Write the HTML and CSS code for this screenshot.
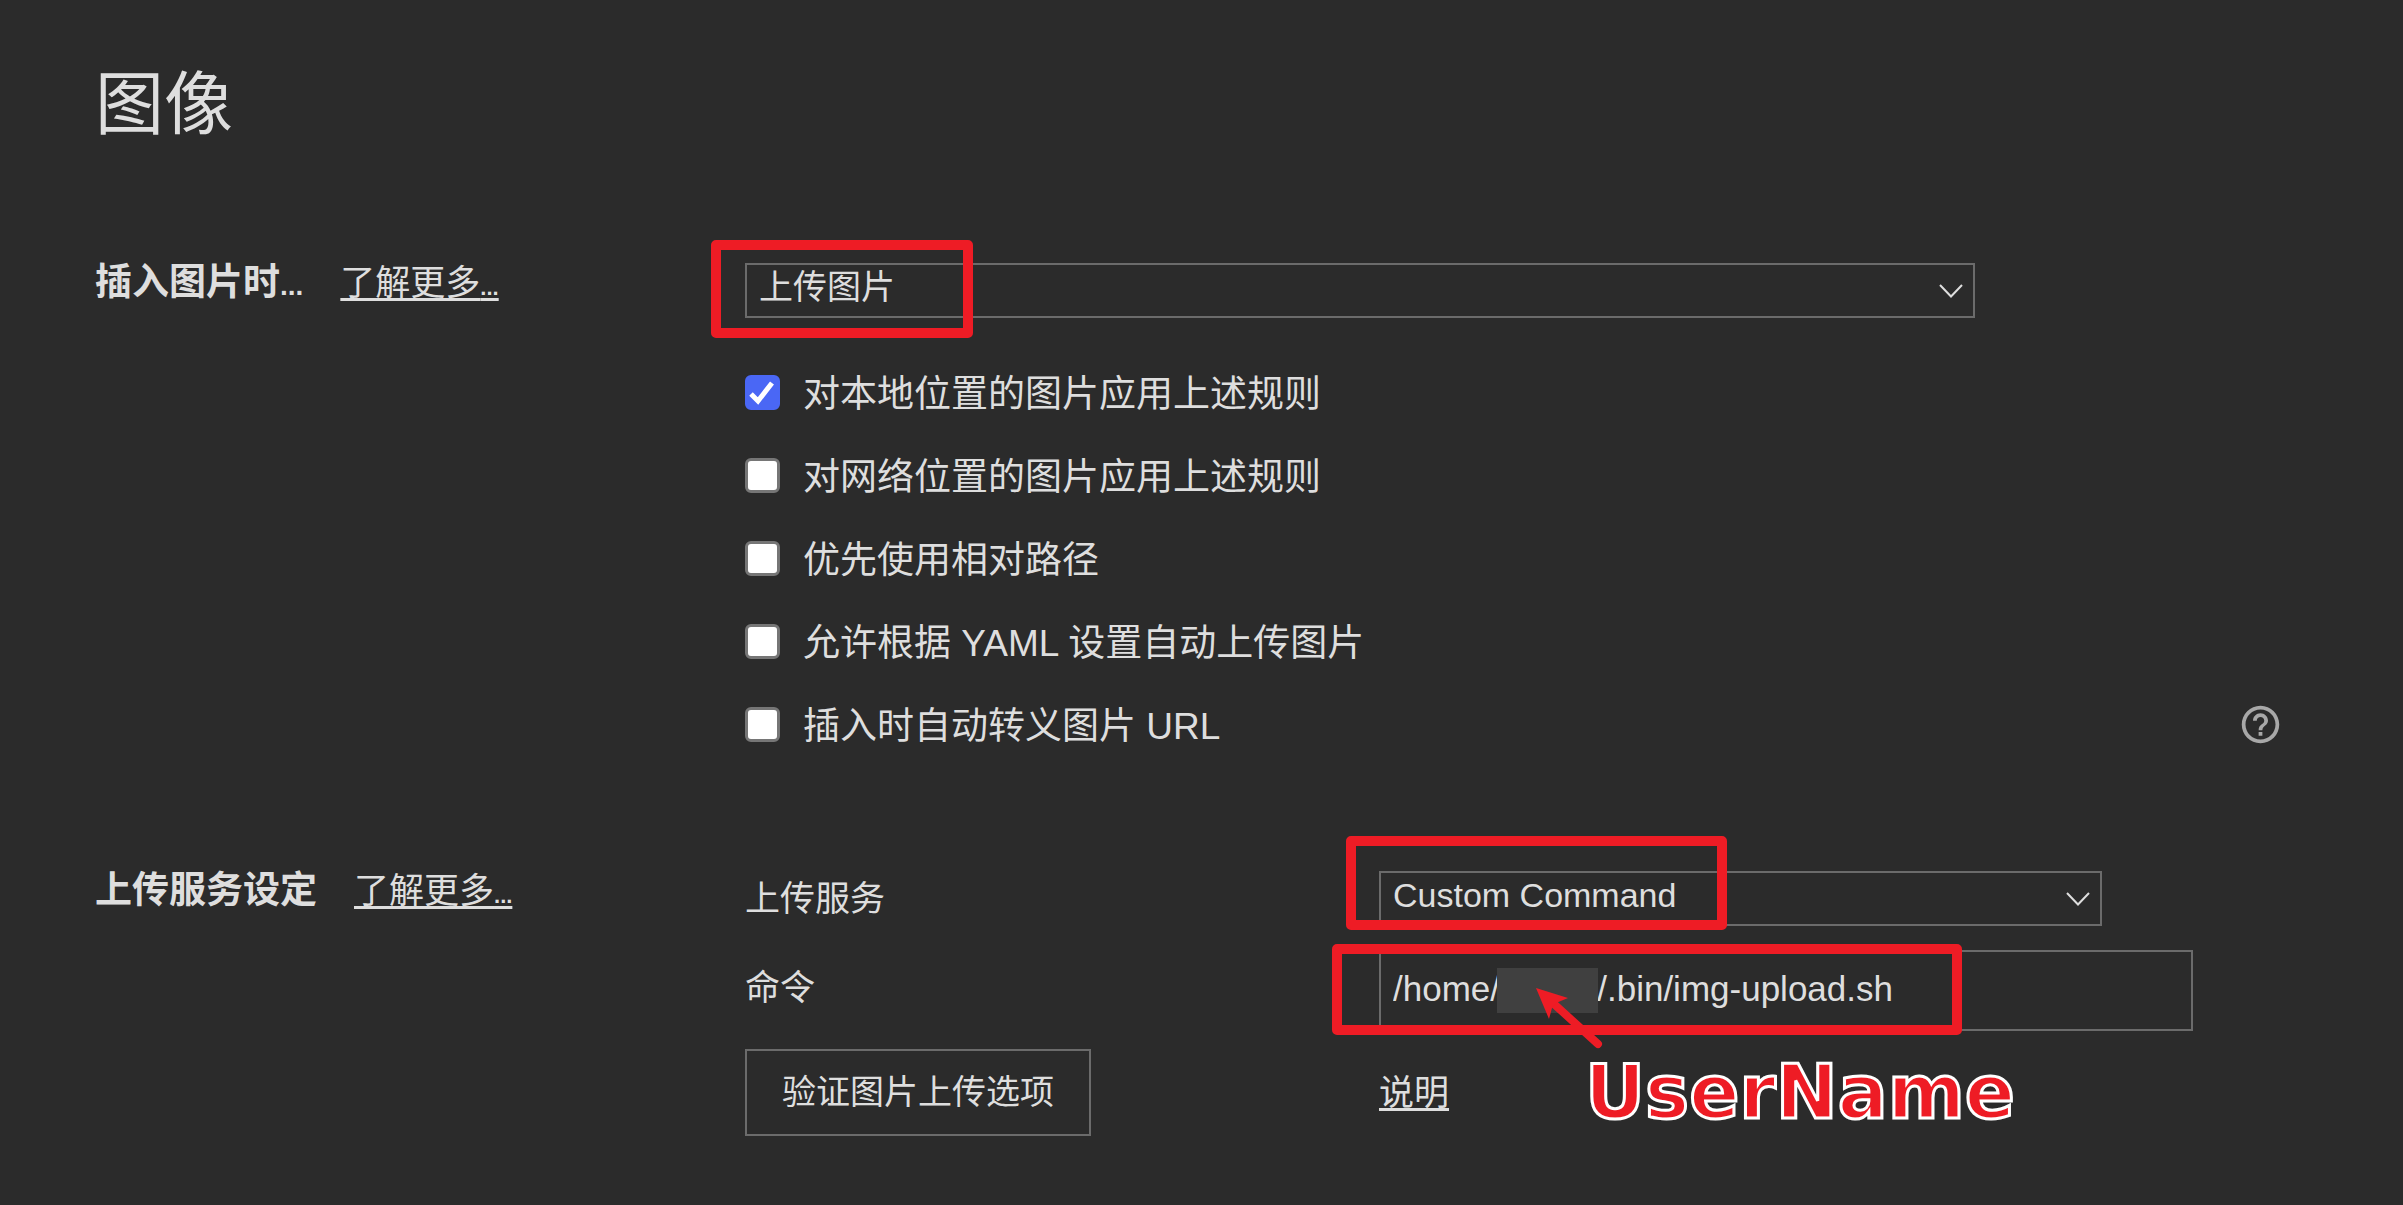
FILE: index.html
```html
<!DOCTYPE html>
<html lang="zh-CN">
<head>
	<meta charset="UTF-8">
	<title>图像</title>
	<link rel="stylesheet" href="styles.css">
</head>
<body>
	<main id="settings">
		<h1>图像</h1>
		<section class="group">
			<div class="group-label">
				<h2>插入图片时<span class="dots">...</span></h2>
				<a href="#insert">了解更多<span class="dots">...</span></a>
			</div>
			<div class="group-body">
				<div class="select-box">
					<select id="action" aria-label="插入图片时">
						<option>上传图片</option>
					</select>
					<svg class="chevron" viewBox="0 0 24 14"><path d="M1 1l11 11.500L23 1"/></svg>
					<span class="mark mark-action"></span>
				</div>
				<div class="checks">
					<div class="check">
						<input type="checkbox" id="local" checked>
						<label for="local">对本地位置的图片应用上述规则</label>
					</div>
					<div class="check">
						<input type="checkbox" id="online">
						<label for="online">对网络位置的图片应用上述规则</label>
					</div>
					<div class="check">
						<input type="checkbox" id="relative">
						<label for="relative">优先使用相对路径</label>
					</div>
					<div class="check">
						<input type="checkbox" id="yaml">
						<label for="yaml">允许根据 YAML 设置自动上传图片</label>
					</div>
					<div class="check">
						<input type="checkbox" id="escape">
						<label for="escape">插入时自动转义图片 URL</label>
						<button type="button" class="help" aria-label="帮助">
							<svg viewBox="0 0 24 24"><path d="M11 18h2v-2h-2v2zm1-16C6.480 2 2 6.480 2 12s4.480 10 10 10 10-4.480 10-10S17.520 2 12 2zm0 18c-4.410 0-8-3.590-8-8s3.590-8 8-8 8 3.590 8 8-3.590 8-8 8zm0-14c-2.210 0-4 1.790-4 4h2c0-1.100.9-2 2-2s2 .9 2 2c0 2-3 1.750-3 5h2c0-2.250 3-2.500 3-5 0-2.210-1.790-4-4-4z"/></svg>
						</button>
					</div>
				</div>
			</div>
		</section>
		<section class="group">
			<div class="group-label">
				<h2>上传服务设定</h2>
				<a href="#upload">了解更多<span class="dots">...</span></a>
			</div>
			<form class="group-body upload">
				<label for="service">上传服务</label>
				<div class="select-box">
					<select id="service">
						<option>Custom Command</option>
					</select>
					<svg class="chevron" viewBox="0 0 24 14"><path d="M1 1l11 11.500L23 1"/></svg>
					<span class="mark mark-service"></span>
				</div>
				<label for="command">命令</label>
				<div class="command-box">
					<input type="text" id="command" value="/home/          /.bin/img-upload.sh">
					<span class="mask"></span>
					<span class="mark mark-command"></span>
					<svg class="arrow" viewBox="0 0 70 64"><path class="shaft" d="M18 16L62 56"/><path class="head" d="M0 0l32 10-12 5-4 5-3 11z"/></svg>
					<span class="note">UserName</span>
				</div>
				<button type="button" class="verify">验证图片上传选项</button>
				<div><a href="#help">说明</a></div>
			</form>
		</section>
	</main>
</body>
</html>
```
FILE: styles.css
```css
* {
	box-sizing: border-box;
}
body {
	margin: 0;
	background-color: #2b2b2b;
	color: #dedede;
	font-family: "Liberation Sans", "Noto Sans CJK SC", sans-serif;
	font-size: 35px;
	line-height: 40px;
}
#settings {
	padding: 66px 120px 64px 95px;
}
h1 {
	margin: 0 0 117px;
	font-size: 69px;
	font-weight: normal;
	line-height: 80px;
}
h2 {
	margin: 0;
	font-size: 37px;
}
a {
	color: inherit;
	text-decoration-thickness: 3px;
	text-underline-offset: 3px;
	text-decoration-skip-ink: none;
}
.group {
	display: grid;
	grid-template-columns: 650px 1fr;
	margin-bottom: 105px;
}
.group:last-child {
	margin-bottom: 0;
}
.group-label {
	display: flex;
	align-items: baseline;
	align-self: start;
	gap: 37px;
}
.dots {
	font-size: 22px;
	font-weight: bold;
}
h2 .dots {
	font-size: 28px;
}

/* fields */
.select-box {
	position: relative;
	width: 80%;
}
select,
input[type="text"],
.verify {
	margin: 0;
	border: 2px solid #6b6b6b;
	border-radius: 0;
	background-color: transparent;
	color: inherit;
	font-family: inherit;
	font-size: 34px;
}
select {
	display: block;
	appearance: none;
	width: 100%;
	height: 55px;
	padding: 0 48px 7px 12px;
}
input[type="text"] {
	display: block;
	width: 100%;
	height: 81px;
	padding: 0 12px 4px;
	font-size: 35px;
}
.chevron {
	position: absolute;
	right: 12px;
	top: 21px;
	width: 24px;
	height: 14px;
	fill: none;
	stroke: #dedede;
	stroke-width: 2;
	pointer-events: none;
}

/* checkboxes */
.checks {
	margin-top: 33px;
}
.check {
	display: flex;
	align-items: center;
	height: 83px;
	font-size: 37px;
}
.check label {
	padding-top: 5px;
}
.check input {
	appearance: none;
	width: 35px;
	height: 35px;
	margin: 0 23px 0 0;
	border: 3px solid #767676;
	border-radius: 6px;
	background-color: #fff;
}
.check input:checked {
	border-color: #4a67f5;
	background: #4a67f5 url("data:image/svg+xml,%3Csvg xmlns='http://www.w3.org/2000/svg' viewBox='0 0 29 29'%3E%3Cpath d='M3 16l7 7L24 5' fill='none' stroke='white' stroke-width='5'/%3E%3C/svg%3E") center / 100% no-repeat;
}
.help {
	width: 45px;
	height: 45px;
	margin-left: auto;
	padding: 0;
	border: 0;
	background: none;
}
.help svg {
	display: block;
	fill: #a8a8a8;
}

/* upload service */
.upload {
	display: grid;
	grid-template-columns: 634px 1fr;
	grid-template-rows: 55px 87px 87px;
	row-gap: 18px;
	align-items: center;
}
.command-box {
	position: relative;
	align-self: end;
	width: 90%;
}
.verify {
	justify-self: start;
	height: 87px;
	padding: 0 35px 6px;
}

/* annotations drawn over the fields */
.mark {
	position: absolute;
	border: 10px solid #ee1c25;
	border-radius: 5px;
	pointer-events: none;
}
.mark-action {
	left: -34px;
	top: -23px;
	width: 262px;
	height: 98px;
}
.mark-service {
	left: -33px;
	top: -35px;
	width: 381px;
	height: 94px;
}
.mark-command {
	left: -47px;
	top: -6px;
	width: 630px;
	height: 91px;
}
.mask {
	position: absolute;
	left: 118px;
	top: 18px;
	width: 101px;
	height: 45px;
	background-color: #404040;
}
.arrow {
	position: absolute;
	left: 157px;
	top: 38px;
	width: 70px;
	height: 64px;
}
.arrow .shaft {
	fill: none;
	stroke: #ee1c25;
	stroke-width: 8;
	stroke-linecap: round;
}
.arrow .head {
	fill: #ee1c25;
}
.note {
	position: absolute;
	left: 206px;
	top: 98px;
	color: #ee1c25;
	font-family: "DejaVu Sans", sans-serif;
	font-size: 74px;
	font-weight: bold;
	line-height: 88px;
	-webkit-text-stroke: 3px #fff;
}
```
